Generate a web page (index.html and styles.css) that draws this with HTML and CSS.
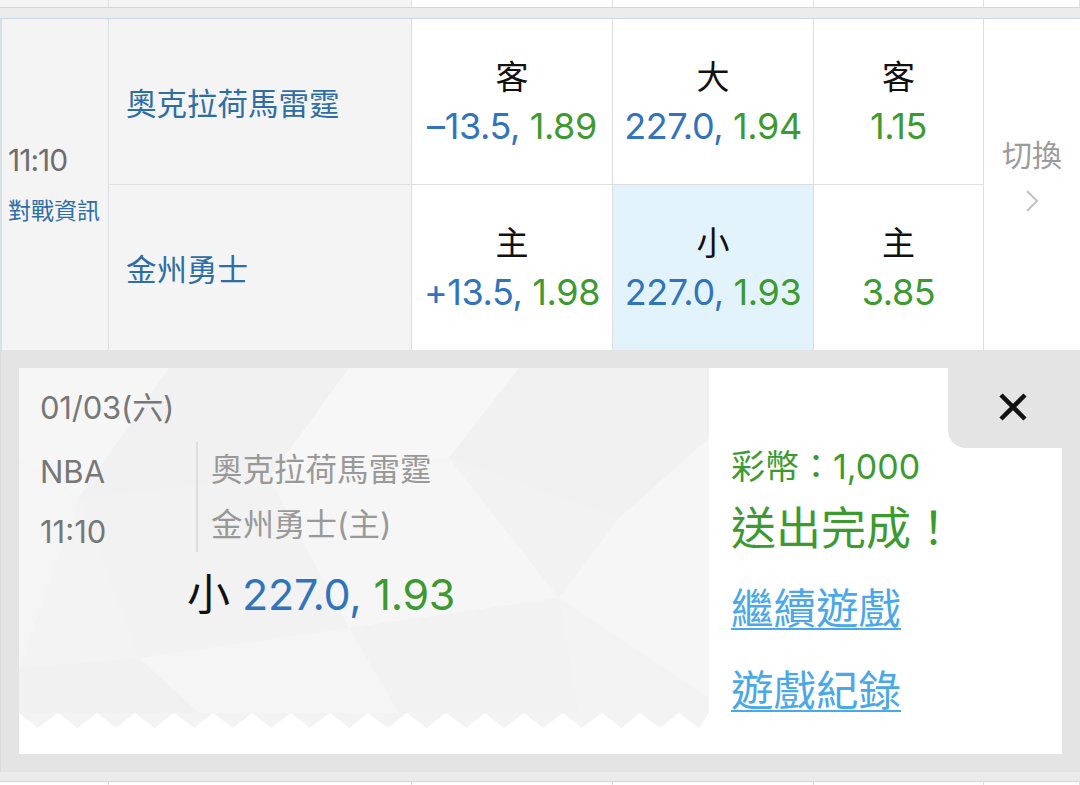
FILE: index.html
```html
<!DOCTYPE html>
<html lang="zh-Hant">
<head>
    <meta charset="UTF-8">
    <meta name="viewport" content="width=device-width, initial-scale=1.0">
    <title>投注完成</title>
    <link rel="stylesheet" href="styles.css">
</head>
<body>

    <div id="board">
        <!-- Previous row (cut off at the top) -->
        <div class="row-stub">
            <div class="stub gray"></div>
            <div class="stub gray"></div>
            <div class="stub"></div>
            <div class="stub"></div>
            <div class="stub"></div>
            <div class="stub"></div>
        </div>
        <div class="band"></div>

        <!-- Match row -->
        <div class="match">
            <div class="time-col">
                <div class="time">11:10</div>
                <a class="info">對戰資訊</a>
            </div>

            <div class="team top">奧克拉荷馬雷霆</div>
            <div class="odd top">
                <div class="side">客</div>
                <div class="num"><span class="blue">–13.5,</span> <span class="green">1.89</span></div>
            </div>
            <div class="odd top">
                <div class="side">大</div>
                <div class="num"><span class="blue">227.0,</span> <span class="green">1.94</span></div>
            </div>
            <div class="odd top">
                <div class="side">客</div>
                <div class="num"><span class="green">1.15</span></div>
            </div>

            <div class="switch">
                <div class="switch-text">切換</div>
                <svg class="chevron" width="16" height="24" viewBox="0 0 16 24">
                    <polyline points="3,2 13,12 3,22" fill="none" stroke="#c2c2c2" stroke-width="2"/>
                </svg>
            </div>

            <div class="team">金州勇士</div>
            <div class="odd">
                <div class="side">主</div>
                <div class="num"><span class="blue">+13.5,</span> <span class="green">1.98</span></div>
            </div>
            <div class="odd picked">
                <div class="side">小</div>
                <div class="num"><span class="blue">227.0,</span> <span class="green">1.93</span></div>
            </div>
            <div class="odd">
                <div class="side">主</div>
                <div class="num"><span class="green">3.85</span></div>
            </div>
        </div>

        <!-- Bet confirmation -->
        <div class="panel">
            <div class="card">
                <div class="ticket">
                    <svg class="ticket-bg" width="690" height="386" viewBox="0 0 690 386">
                        <polygon fill="#f3f3f3" points="0,0 690,0 690,345 680,360 660,345 641,360 621,345 602,360 583,345 563,360 544,345 524,360 505,345 485,360 466,345 447,360 427,345 408,360 388,345 369,360 349,345 330,360 311,345 291,360 272,345 252,360 233,345 214,360 194,345 175,360 155,345 136,360 116,345 97,360 78,345 58,360 39,345 19,360 0,345"/>
                        <polygon fill="#f6f6f6" points="0,0 150,0 60,130 0,90"/>
                        <polygon fill="#f1f1f1" points="150,0 330,0 250,110 60,130"/>
                        <polygon fill="#f7f7f7" points="330,0 500,0 430,90 250,110"/>
                        <polygon fill="#f1f1f1" points="500,0 690,0 690,70 600,150 430,90"/>
                        <polygon fill="#f5f5f5" points="0,90 60,130 0,300"/>
                        <polygon fill="#f2f2f2" points="60,130 250,110 330,260 120,290"/>
                        <polygon fill="#f6f6f6" points="250,110 430,90 540,230 330,260"/>
                        <polygon fill="#f2f2f2" points="430,90 600,150 540,230"/>
                        <polygon fill="#f6f6f6" points="600,150 690,70 690,330 540,230"/>
                        <polygon fill="#f1f1f1" points="0,300 120,290 180,345 0,345"/>
                        <polygon fill="#f5f5f5" points="120,290 330,260 380,345 180,345"/>
                        <polygon fill="#f2f2f2" points="330,260 540,230 560,345 380,345"/>
                    </svg>

                    <div class="date">01/03(六)</div>
                    <div class="ticket-body">
                        <div class="meta">
                            <div>NBA</div>
                            <div>11:10</div>
                        </div>
                        <div class="teams">
                            <div>奧克拉荷馬雷霆</div>
                            <div>金州勇士(主)</div>
                        </div>
                    </div>
                    <div class="pick">小 <span class="blue">227.0,</span> <span class="green">1.93</span></div>
                </div>

                <div class="result">
                    <div class="credit">彩幣：1,000</div>
                    <div class="done">送出完成！</div>
                    <a class="link">繼續遊戲</a>
                    <a class="link">遊戲紀錄</a>
                </div>

                <!-- Close tab -->
                <div class="close">
                    <svg width="30" height="30" viewBox="0 0 30 30">
                        <path d="M3 3 L27 27 M27 3 L3 27" stroke="#111" stroke-width="4.5" fill="none"/>
                    </svg>
                </div>
            </div>
        </div>

        <div class="band bottom"></div>
        <div class="row-stub">
            <div class="stub"></div>
            <div class="stub"></div>
            <div class="stub"></div>
            <div class="stub"></div>
            <div class="stub"></div>
            <div class="stub"></div>
        </div>
    </div>

</body>
</html>
```

FILE: styles.css
```css
* {
    margin: 0;
    padding: 0;
    box-sizing: border-box;
}

body {
    background-color: #ffffff;
    overflow: hidden;
    font-family: Inter, "Noto Sans CJK TC", sans-serif;
    color: #111;
}

#board {
    width: 1080px;
}

.blue {
    color: #3273bd;
}

.green {
    color: #3d9a2f;
}

/* Cut-off rows and the thin bands between them */
.row-stub {
    display: grid;
    grid-template-columns: 109px 303px 201px 201px 170px 1fr;
    height: 7px;
}

.stub {
    border-right: 1px solid #e0e0e0;
    background-color: #fff;
}

.stub.gray {
    background-color: #f5f5f5;
}

.band {
    height: 12px;
    background-color: #ebebeb;
    border-top: 1px solid #c8dae9;
    border-bottom: 1px solid #c8dae9;
}

.band.bottom {
    height: 10px;
    border-top: none;
}

/* Match row */
.match {
    display: grid;
    grid-template-columns: 109px 303px 201px 201px 170px 1fr;
    grid-template-rows: 166px 165px;
}

.time-col {
    grid-row: 1 / 3;
    grid-column: 1;
    background-color: #f4f4f4;
    border-left: 2px solid #d8e0e8;
    border-right: 1px solid #d8dde2;
    display: flex;
    flex-direction: column;
    justify-content: center;
    padding-left: 6px;
    padding-top: 4px;
}

.time {
    font-size: 30px;
    line-height: 48px;
    color: #6e6e6e;
    letter-spacing: -1px;
}

.info {
    font-size: 23px;
    line-height: 54px;
    color: #2e6ea6;
}

.team {
    background-color: #f4f4f4;
    border-right: 1px solid #dedede;
    display: flex;
    align-items: center;
    padding-left: 17px;
    font-size: 30.5px;
    color: #2e6ea6;
}

.team.top,
.odd.top {
    border-bottom: 1px solid #dedede;
}

.odd {
    border-right: 1px solid #dedede;
    display: flex;
    flex-direction: column;
    justify-content: center;
    align-items: center;
    background-color: #fff;
}

.odd.picked {
    background-color: #e3f3fc;
}

.side {
    font-size: 33px;
    line-height: 49px;
    color: #111;
}

.num {
    font-size: 36px;
    line-height: 49px;
    letter-spacing: -0.4px;
    white-space: nowrap;
}

.switch {
    grid-row: 1 / 3;
    grid-column: 6;
    display: flex;
    flex-direction: column;
    align-items: center;
    justify-content: center;
    padding-bottom: 12px;
}

.switch-text {
    font-size: 30px;
    line-height: 48px;
    color: #9b9b9b;
}

.chevron {
    margin-top: 10px;
    margin-bottom: 14px;
}

/* Confirmation panel */
.panel {
    background-color: #e4e4e4;
    padding: 18px;
    border-left: 1px solid #dadada;
}

.card {
    position: relative;
    display: flex;
    height: 386px;
    background-color: #fff;
}

.ticket {
    position: relative;
    width: 690px;
    padding: 20px 0 0 21px;
    color: #777;
}

.ticket-bg {
    position: absolute;
    top: 0;
    left: 0;
    z-index: 0;
}

.date,
.ticket-body,
.pick {
    position: relative;
    z-index: 1;
}

.date {
    font-size: 31px;
    line-height: 40px;
    letter-spacing: -0.2px;
}

.ticket-body {
    display: flex;
    margin-top: 14px;
}

.meta {
    width: 156px;
    font-size: 31px;
    line-height: 60px;
}

.teams {
    border-left: 2px solid #dddddd;
    padding-left: 13px;
    font-size: 31.5px;
    line-height: 55px;
    color: #999;
    height: 110px;
}

.pick {
    padding-left: 147px;
    font-size: 43px;
    line-height: 60px;
    color: #111;
    margin-top: 2px;
}

.pick .blue,
.pick .green {
    letter-spacing: -0.3px;
}

.result {
    flex: 1;
    padding: 76px 0 0 22px;
}

.credit {
    font-size: 34px;
    line-height: 46px;
    color: #3d9a2f;
}

.done {
    font-size: 45px;
    line-height: 78px;
    color: #3d9a2f;
}

.link {
    display: block;
    font-size: 42.5px;
    line-height: 82px;
    color: #4aa8ea;
    text-decoration: underline;
    text-decoration-thickness: 2px;
    text-underline-offset: 4px;
}

.close {
    position: absolute;
    top: 0;
    right: 0;
    width: 114px;
    height: 80px;
    background-color: #e4e4e4;
    border-bottom-left-radius: 18px;
    padding: 24px 0 0 50px;
}
```
